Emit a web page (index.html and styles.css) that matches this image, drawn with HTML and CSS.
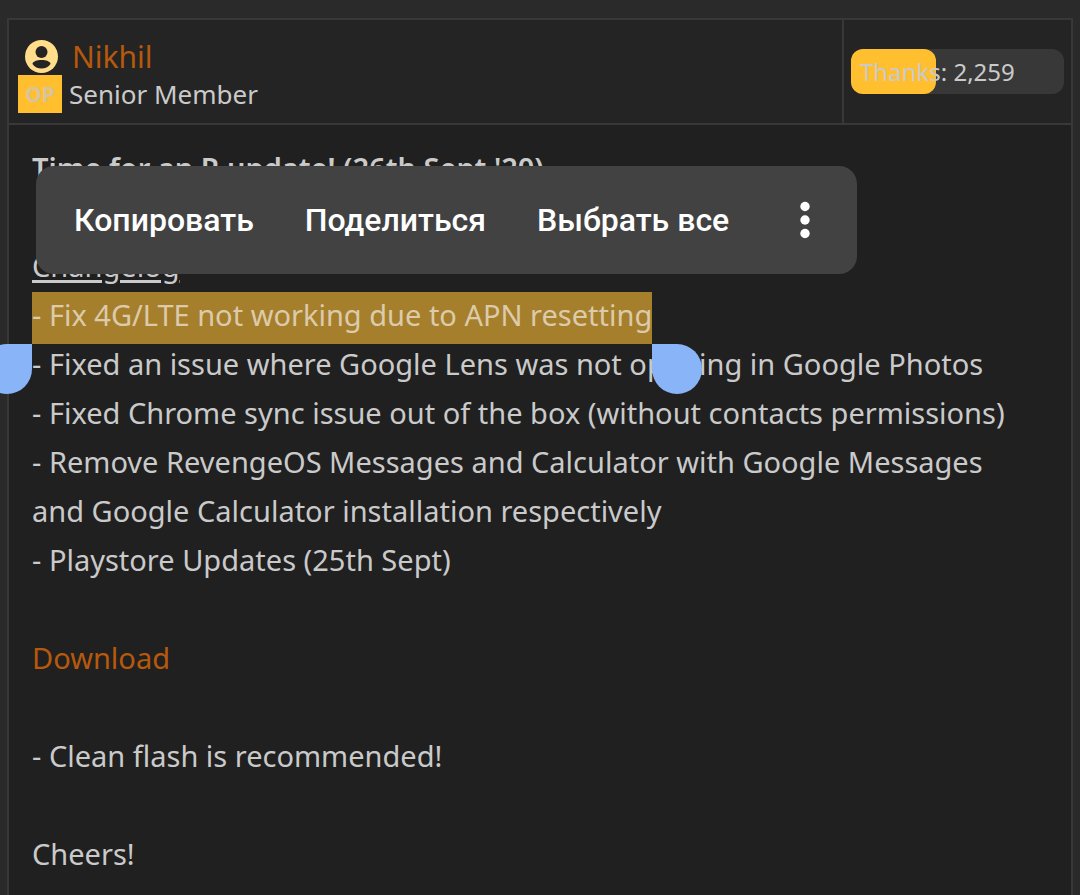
FILE: index.html
```html
<!DOCTYPE html>
<html lang="en">
<head>
  <meta charset="UTF-8">
  <meta name="viewport" content="width=device-width, initial-scale=1.0">
  <title>Thread - Nikhil</title>
  <link rel="stylesheet" href="styles.css">
</head>
<body>
  <article class="post">
    <header class="post-header">
      <div class="user">
        <div class="user-name">
          <svg class="avatar" viewBox="0 0 33 33" aria-hidden="true">
            <circle cx="16.5" cy="16.5" r="16.5" fill="#ffdd8a"/>
            <circle cx="16.5" cy="12" r="6" fill="#242424"/>
            <path d="M7.500 24C7.500 21.500 12 20 16.500 20s9 1.500 9 4c-2 3-5.400 4.500-9 4.500s-7-1.500-9-4.500z" fill="#242424"/>
          </svg>
          <a href="#">Nikhil</a>
        </div>
        <div class="user-title">
          <span class="op">OP</span>
          <span>Senior Member</span>
        </div>
      </div>
      <div class="thanks">
        <div class="thanks-bar">
          <div class="thanks-fill" style="width: 40%"></div>
          <span class="thanks-text">Thanks: 2,259</span>
        </div>
      </div>
    </header>

    <div class="post-body">
      <p><b>Time for an R update! (26th Sept '20)</b></p>
      <p>
        <u>Changelog</u><br>
        <mark>- Fix 4G/LTE not working due to APN resetting<i class="handle handle-start"></i><i class="handle handle-end"></i></mark><br>
        - Fixed an issue where Google Lens was not opening in Google Photos<br>
        - Fixed Chrome sync issue out of the box (without contacts permissions)<br>
        - Remove RevengeOS Messages and Calculator with Google Messages and Google Calculator installation respectively<br>
        - Playstore Updates (25th Sept)
      </p>
      <p><a href="#">Download</a></p>
      <p>- Clean flash is recommended!</p>
      <p>Cheers!</p>

      <!-- text selection menu -->
      <div class="menu" lang="ru">
        <button type="button">Копировать</button>
        <button type="button">Поделиться</button>
        <button type="button">Выбрать все</button>
        <button type="button" class="more" aria-label="Ещё">
          <svg width="10" height="38" viewBox="0 0 10 38" fill="#fff">
            <circle cx="5" cy="5.500" r="4.700"/>
            <circle cx="5" cy="19" r="4.700"/>
            <circle cx="5" cy="32.500" r="4.700"/>
          </svg>
        </button>
      </div>
    </div>
  </article>
</body>
</html>
```

FILE: styles.css
```css
* {
  box-sizing: border-box;
}
body {
  display: flex;
  min-height: 100vh;
  margin: 0;
  padding: 18px 7px 0;
  overflow-x: hidden;
  background-color: #2a2a2a;
  color: #cacaca;
  font-family: "Noto Sans", "Open Sans", sans-serif;
  font-size: 29px;
  line-height: 49px;
}
a {
  color: #b6590c;
  text-decoration: none;
}
.post {
  display: flex;
  flex-direction: column;
  flex: 1;
  border: 2px solid #383838;
  border-bottom: none;
  background-color: #202020;
}
.post-header {
  display: flex;
  border-bottom: 2px solid #383838;
  background-color: #242424;
}
.user {
  flex: 1;
  padding: 18px 9px 10px;
}
.user-name {
  display: flex;
  align-items: center;
  gap: 14px;
  height: 37px;
  padding-left: 7px;
  font-size: 30px;
}
.avatar {
  width: 33px;
  height: 33px;
}
.user-title {
  display: flex;
  align-items: center;
  gap: 7px;
  font-size: 26px;
  line-height: 38px;
}
.op {
  width: 44px;
  background-color: #ffbf2f;
  color: #d8c49b;
  font-size: 21px;
  font-weight: bold;
  text-align: center;
}
.thanks {
  display: flex;
  align-items: center;
  width: 229px;
  padding: 0 7px;
  border-left: 2px solid #383838;
}
.thanks-bar {
  display: grid;
  flex: 1;
  border-radius: 12px;
  background-color: #383838;
  font-size: 24px;
  line-height: 45px;
}
.thanks-fill,
.thanks-text {
  grid-area: 1 / 1;
}
.thanks-fill {
  border-radius: 12px;
  background-color: #ffbf2f;
}
.thanks-text {
  padding-left: 9px;
}
.post-body {
  position: relative;
  flex: 1;
  padding: 18px 36px 18px 23px;
}
.post-body p {
  margin: 0 0 49px;
}
.post-body p:last-of-type {
  margin-bottom: 0;
}
b {
  font-weight: 600;
}
u {
  text-decoration-thickness: 3px;
  text-underline-offset: 3px;
}
mark {
  position: relative;
  padding: 3px 0 10px;
  background-color: #a67f2c;
  color: #dccbab;
}
.handle {
  position: absolute;
  top: 100%;
  width: 50px;
  height: 50px;
  background-color: #8ab4f8;
}
.handle-start {
  right: 100%;
  border-radius: 25px 0 25px 25px;
}
.handle-end {
  left: 100%;
  border-radius: 0 25px 25px 25px;
}
.menu {
  position: absolute;
  top: 41px;
  left: 27px;
  display: flex;
  align-items: center;
  gap: 51px;
  height: 108px;
  padding: 0 47px 0 38px;
  border-radius: 18px;
  background-color: #424242;
}
.menu button {
  padding: 0;
  border: none;
  background: none;
  color: #fff;
  font-family: Roboto, sans-serif;
  font-size: 32px;
  font-weight: 500;
  cursor: pointer;
}
.menu .more {
  display: flex;
  margin-left: 20px;
}
```
